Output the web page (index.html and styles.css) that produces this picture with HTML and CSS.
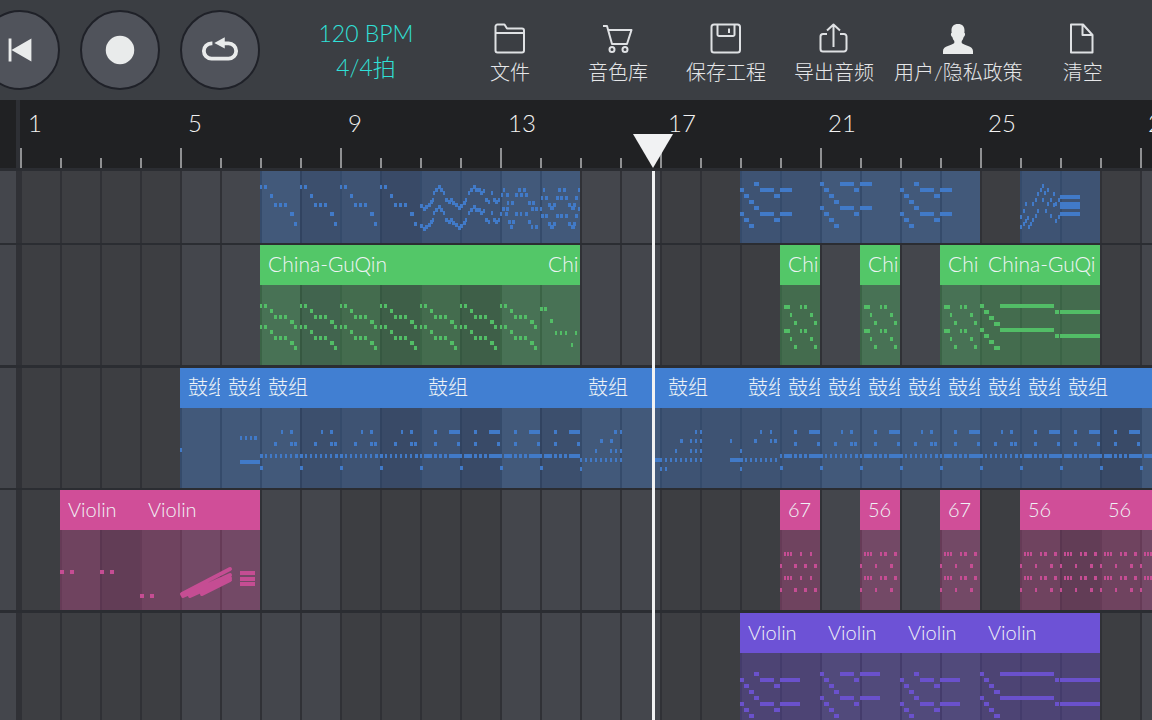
FILE: index.html
```
<!DOCTYPE html>
<html lang="zh-CN">
<head>
<meta charset="utf-8">
<meta name="viewport" content="width=device-width, initial-scale=1">
<title>编曲工程</title>
<link rel="stylesheet" href="styles.css">
</head>
<body>
<svg class="defs" aria-hidden="true">
  <defs>
    <path id="fall" d="M0 24h2M4 24h3M10 33h3M14 42h3M19 42h3M24 42h3M30 51h4M34 61h3"/>
    <path id="wave" d="M0 43h3M3 46h3M5 44h3M8 42h3M10 39h3M12 37h2M13 30h2M15 27h3M18 24h3M20 27h3M23 30h2M25 37h3M28 39h3M30 37h3M32 40h3M35 42h3M38 45h3M40 43h3M43 40h3M45 37h2M48 30h2M50 27h3M53 24h3M55 27h3M58 27h3M60 30h3M63 28h2M65 37h3M68 39h2M71 30h2M73 37h3M75 39h3M78 37h2"/>
    <path id="weave-a" d="M3 27h2M18 27h3M23 27h3M1 32h2M6 32h3M15 32h3M20 32h3M25 32h3M7 40h2M11 40h3M28 40h3M32 40h3M2 46h3M6 46h3M31 46h3M35 46h3M0 51h2M5 51h3M15 51h3M20 51h2M25 51h3M8 59h3M12 59h3M28 59h3M10 64h3M31 64h2M35 64h3"/>
    <path id="weave-b" d="M3 27h2M18 27h3M23 27h3M38 27h2M1 35h2M5 35h3M16 35h3M20 35h3M25 35h3M35 35h3M8 42h3M13 42h3M28 42h3M33 42h3M0 46h2M10 45h4M31 45h4M38 46h2M1 53h3M5 53h3M16 53h3M20 53h3M25 53h3M35 53h3M8 61h3M13 61h3M28 61h3M33 61h3M10 64h4M31 64h4"/>
    <path id="step-a" d="M0 27h4M4 33h5M9 39h5M14 21h5M20 27h14M34 33h6M40 27h12"/>
    <path id="step-b" d="M0 21h4M4 27h5M9 33h5M14 39h5M20 21h14M34 27h5M40 21h12"/>
    <path id="step-c" d="M0 21h4M4 27h5M9 33h5M14 39h6M20 21h54M75 27h4M80 27h40"/>
    <path id="rise" d="M0 64h2M3 61h2M5 58h2M0 54h2M3 48h2M5 41h2M8 64h2M10 61h2M12 57h2M7 55h2M12 41h2M15 37h2M15 53h2M17 31h2M17 48h2M20 27h2M22 23h2M24 30h2M27 27h2M25 48h2M22 37h2M27 41h2M30 37h2M33 31h2M33 42h2M30 53h2M35 58h2M38 54h2M35 41h2M38 37h2"/>
    <path id="pluck" d="M0 21h2M4 21h3M10 26h3M14 32h3M19 32h3M24 32h3M30 37h4M34 42h3"/>
    <path id="cross" d="M4 22h6M20 22h2M24 22h3M10 30h2M30 30h3M14 38h3M34 38h3"/>
    <path id="beat-a" d="M21 24h2M30 24h3M14 36h3M30 36h3M34 36h3M0 48h3M5 48h2M10 48h2M15 48h2M20 48h2M25 48h2M30 48h2M35 48h3M0 60h3"/>
    <path id="beat-b" d="M14 24h3M29 24h11M14 36h3M37 36h3M0 48h2M4 48h8M14 48h3M19 48h3M24 48h3M29 48h11M0 60h3"/>
    <path id="fiddle" d="M0 42h4M10 42h4"/>
    <path id="ring-a" d="M4 24h2M7 24h2M10 24h2M20 24h2M30 24h2M0 36h2M14 36h3M24 36h3M34 36h3"/>
    <path id="ring-b" d="M4 24h2M7 24h2M10 24h2M20 24h2M24 24h3M34 24h3M0 36h2M15 36h2M30 36h3"/>
  </defs>
</svg>

<header class="toolbar">
  <div class="transport">
    <button type="button" class="round" aria-label="回到开头"><svg viewBox="0 0 80 80"><path d="M28 28h3v24h-3zM31 40L52 28v24z"/></svg></button>
    <button type="button" class="round" aria-label="录音"><svg viewBox="0 0 80 80"><circle cx="40" cy="40" r="15"/></svg></button>
    <button type="button" class="round" aria-label="循环"><svg viewBox="0 0 80 80"><path class="loop" d="M32 33h-1a8 8 0 0 0 0 16h18a8 8 0 0 0 0-16h-5"/><path d="M34 32.500L45 26.500v12z"/></svg></button>
  </div>
  <button type="button" class="tempo"><span>120 BPM</span><span>4/4拍</span></button>
  <nav class="menu">
    <button type="button"><svg viewBox="0 0 32 32"><path d="M1.500 11V4.500a2 2 0 0 1 2-2h7l2.500 4h15a2 2 0 0 1 2 2v20a2 2 0 0 1-2 2h-24.500a2 2 0 0 1-2-2zh28.500"/></svg><span>文件</span></button>
    <button type="button"><svg viewBox="0 0 32 32"><path d="M1 4h4l5 18h15l4.500-14H6.500"/><circle cx="10" cy="27.500" r="2.500"/><circle cx="23" cy="27.500" r="2.500"/></svg><span>音色库</span></button>
    <button type="button"><svg viewBox="0 0 32 32"><rect x="1.500" y="2.500" width="28.500" height="28" rx="2.500"/><path d="M7.500 3v9.500a1.500 1.500 0 0 0 1.500 1.500h14a1.500 1.500 0 0 0 1.500-1.500V3M19 6.500v4.500"/></svg><span>保存工程</span></button>
    <button type="button"><svg viewBox="0 0 32 32"><path d="M9 12H5a2.500 2.500 0 0 0-2.500 2.500v12.500a2.500 2.500 0 0 0 2.500 2.500h21a2.500 2.500 0 0 0 2.500-2.500V14.500a2.500 2.500 0 0 0-2.500-2.500h-4M15.500 25V2.500M9 8.500L15.500 2.500 22 8.500"/></svg><span>导出音频</span></button>
    <button type="button"><svg viewBox="0 0 32 32"><path class="solid" d="M16 2c4.500 0 6.500 2.500 6.500 6.500 0 .8 0 1.500-.2 2.200 1.200.3 1 3.300-.6 4.300-.5 2-1.200 3.200-2 4v2c2 2.500 11.300 2.500 11.300 8V32H1v-3c0-5.500 9.300-5.500 11.300-8V19c-.8-.8-1.500-2-2-4-1.600-1-1.800-4-.6-4.300-.2-.7-.2-1.400-.2-2.200C9.500 4.500 11.500 2 16 2z"/></svg><span>用户/隐私政策</span></button>
    <button type="button"><svg viewBox="0 0 32 32"><path d="M4 2.500h12l9.500 10.500v17.500H4zM15.500 2.500V13h10"/></svg><span>清空</span></button>
  </nav>
</header>

<main class="timeline">
  <ol class="ruler">
    <li>1</li><li>5</li><li>9</li><li>13</li><li>17</li><li>21</li><li>25</li><li>29</li>
  </ol>

  <section class="tracks">
    <div class="track blue scrolled">
      <div class="clip" style="--start:7;--len:8"><svg class="notes">
        <rect class="repeat" x="40" width="40" height="80"/><rect class="repeat" x="120" width="40" height="80"/>
        <use href="#fall"/><use href="#fall" x="40"/><use href="#fall" x="80"/><use href="#fall" x="120"/>
        <use href="#wave" x="160"/><use href="#wave" x="160" y="20"/><use href="#weave-a" x="240"/><use href="#weave-b" x="280"/></svg></div>
      <div class="clip" style="--start:19;--len:6"><svg class="notes">
        <use href="#step-a"/><use href="#step-a" y="24"/><use href="#step-b" x="80"/><use href="#step-b" x="80" y="24"/><use href="#step-a" x="160"/><use href="#step-a" x="160" y="24"/></svg></div>
      <div class="clip" style="--start:26;--len:2"><svg class="notes"><use href="#rise"/><path d="M40 34h20M40 41h20M40 44h20M40 51h20"/></svg></div>
    </div>

    <div class="track green">
      <div class="clip" style="--start:7;--len:7"><h2>China-GuQin</h2><svg class="notes">
        <rect class="repeat" x="40" width="40" height="80"/><rect class="repeat" x="120" width="40" height="80"/><rect class="repeat" x="200" width="40" height="80"/>
        <use href="#pluck"/><use href="#pluck" y="21"/><use href="#pluck" x="40"/><use href="#pluck" x="40" y="21"/><use href="#pluck" x="80"/><use href="#pluck" x="80" y="21"/><use href="#pluck" x="120"/><use href="#pluck" x="120" y="21"/><use href="#pluck" x="160"/><use href="#pluck" x="160" y="21"/><use href="#pluck" x="200"/><use href="#pluck" x="200" y="21"/><use href="#pluck" x="240"/><use href="#pluck" x="240" y="21"/></svg></div>
      <div class="clip" style="--start:14;--len:1"><h2>Chi</h2><svg class="notes"><path d="M0 24h3M4 24h3M10 36h3M15 48h2M20 48h2M25 48h2M35 48h2M31 60h2"/></svg></div>
      <div class="clip" style="--start:20;--len:1"><h2>Chi</h2><svg class="notes"><use href="#cross"/><use href="#cross" y="24"/></svg></div>
      <div class="clip" style="--start:22;--len:1"><h2>Chi</h2><svg class="notes"><use href="#cross"/><use href="#cross" y="24"/></svg></div>
      <div class="clip" style="--start:24;--len:1"><h2>Chi</h2><svg class="notes"><use href="#cross"/><use href="#cross" y="24"/></svg></div>
      <div class="clip" style="--start:25;--len:3"><h2>China-GuQi</h2><svg class="notes"><use href="#step-c"/><use href="#step-c" y="24"/></svg></div>
    </div>

    <div class="track blue">
      <div class="clip" style="--start:5;--len:1"><h2>鼓组</h2><svg class="notes"><path d="M0 42h2"/></svg></div>
      <div class="clip" style="--start:6;--len:1"><h2>鼓组</h2><svg class="notes"><path d="M20 30h2M25 30h2M30 30h2M34 30h3M20 54h20"/></svg></div>
      <div class="clip" style="--start:7;--len:4"><h2>鼓组</h2><svg class="notes">
        <rect class="repeat" x="40" width="40" height="80"/><rect class="repeat" x="120" width="40" height="80"/>
        <use href="#beat-a"/><use href="#beat-a" x="40"/><use href="#beat-a" x="80"/><use href="#beat-a" x="120"/></svg></div>
      <div class="clip" style="--start:11;--len:4"><h2>鼓组</h2><svg class="notes">
        <rect class="repeat" x="40" width="40" height="80"/><rect class="repeat" x="120" width="40" height="80"/>
        <use href="#beat-b"/><use href="#beat-b" x="40"/><use href="#beat-b" x="80"/><use href="#beat-b" x="120"/></svg></div>
      <div class="clip" style="--start:15;--len:2"><h2>鼓组</h2><svg class="notes"><path d="M34 24h3M40 24h2M20 33h3M30 33h3M15 43h2M30 43h2M35 43h2M40 43h2M0 52h2M5 52h2M10 52h2M15 52h2M20 52h2M25 52h2M30 52h2M35 52h2M40 52h2M75 52h5M0 61h2"/></svg></div>
      <div class="clip" style="--start:17;--len:2"><h2>鼓组</h2><svg class="notes"><path d="M35 24h2M40 24h2M20 33h3M30 33h2M35 33h2M40 33h2M15 43h2M30 43h2M35 43h2M40 43h2M0 52h2M5 52h2M10 52h2M15 52h2M20 52h2M25 52h2M30 52h2M35 52h2M40 52h2M0 61h2M5 61h2M70 33h2M70 52h10"/></svg></div>
      <div class="clip" style="--start:19;--len:1"><h2>鼓组</h2><svg class="notes"><path d="M20 24h2M30 24h2M14 33h3M30 33h2M34 33h3M0 43h2M0 52h3M5 52h2M10 52h2M15 52h2M20 52h2M25 52h2M30 52h2M35 52h2M0 61h2"/></svg></div>
      <div class="clip" style="--start:20;--len:1"><h2>鼓组</h2><svg class="notes"><use href="#beat-b"/></svg></div>
      <div class="clip" style="--start:21;--len:1"><h2>鼓组</h2><svg class="notes"><use href="#beat-a"/></svg></div>
      <div class="clip" style="--start:22;--len:1"><h2>鼓组</h2><svg class="notes"><use href="#beat-b"/></svg></div>
      <div class="clip" style="--start:23;--len:1"><h2>鼓组</h2><svg class="notes"><use href="#beat-a"/></svg></div>
      <div class="clip" style="--start:24;--len:1"><h2>鼓组</h2><svg class="notes"><use href="#beat-b"/></svg></div>
      <div class="clip" style="--start:25;--len:1"><h2>鼓组</h2><svg class="notes"><use href="#beat-a"/></svg></div>
      <div class="clip" style="--start:26;--len:1"><h2>鼓组</h2><svg class="notes"><use href="#beat-b"/></svg></div>
      <div class="clip" style="--start:27;--len:4"><h2>鼓组</h2><svg class="notes">
        <rect class="repeat" x="40" width="40" height="80"/><rect class="repeat" x="120" width="40" height="80"/>
        <use href="#beat-b"/><use href="#beat-b" x="40"/><use href="#beat-b" x="80"/><use href="#beat-b" x="120"/></svg></div>
    </div>

    <div class="track pink">
      <div class="clip" style="--start:2;--len:2"><h2>Violin</h2><svg class="notes"><rect class="repeat" x="40" width="40" height="80"/><use href="#fiddle"/><use href="#fiddle" x="40"/></svg></div>
      <div class="clip" style="--start:4;--len:3"><h2>Violin</h2><svg class="notes"><path d="M0 66h4M10 66h4M100 43h15M100 49h15M100 54h15"/><path class="slide" d="M42 64L90 39M43 66L90 45M50 66L90 48M62 64L90 50"/></svg></div>
      <div class="clip" style="--start:20;--len:1"><h2>67</h2><svg class="notes"><use href="#ring-a"/><use href="#ring-a" y="24"/></svg></div>
      <div class="clip" style="--start:22;--len:1"><h2>56</h2><svg class="notes"><use href="#ring-b"/><use href="#ring-b" y="24"/></svg></div>
      <div class="clip" style="--start:24;--len:1"><h2>67</h2><svg class="notes"><use href="#ring-b"/><use href="#ring-b" y="24"/></svg></div>
      <div class="clip" style="--start:26;--len:2"><h2>56</h2><svg class="notes"><rect class="repeat" x="40" width="40" height="80"/><use href="#ring-b"/><use href="#ring-b" y="24"/><use href="#ring-b" x="40"/><use href="#ring-b" x="40" y="24"/></svg></div>
      <div class="clip" style="--start:28;--len:2"><h2>56</h2><svg class="notes"><use href="#ring-b"/><use href="#ring-b" y="24"/><use href="#ring-b" x="40"/><use href="#ring-b" x="40" y="24"/></svg></div>
    </div>

    <div class="track purple">
      <div class="clip" style="--start:19;--len:2"><h2>Violin</h2><svg class="notes"><use href="#step-a"/><use href="#step-a" y="24"/><path d="M52 27h8M52 51h8"/></svg></div>
      <div class="clip" style="--start:21;--len:2"><h2>Violin</h2><svg class="notes"><use href="#step-b"/><use href="#step-b" y="24"/><path d="M52 21h8M52 45h8"/></svg></div>
      <div class="clip" style="--start:23;--len:2"><h2>Violin</h2><svg class="notes"><use href="#step-a"/><use href="#step-a" y="24"/><path d="M52 27h8M52 51h8"/></svg></div>
      <div class="clip" style="--start:25;--len:3"><h2>Violin</h2><svg class="notes"><use href="#step-c"/><use href="#step-c" y="24"/></svg></div>
    </div>
  </section>

  <div class="playhead"><svg viewBox="0 0 40 34"><path d="M0 0h40L20 34z"/></svg></div>
</main>
</body>
</html>
```

FILE: styles.css
```
* {
  box-sizing: border-box;
}

body {
  margin: 0;
  height: 100vh;
  display: flex;
  flex-direction: column;
  overflow: hidden;
  background: #3d3e43;
  color: #e6e7e9;
  font-family: Lato, "Noto Sans CJK SC", sans-serif;
  font-weight: 300;
}

.defs {
  display: none;
}

button {
  padding: 0;
  border: 0;
  background: none;
  color: inherit;
  font: inherit;
  cursor: pointer;
}

/* Toolbar */

.toolbar {
  flex: none;
  display: flex;
  align-items: center;
  height: 100px;
  overflow: hidden;
  background: #3b3e43;
}

.transport {
  flex: none;
  display: flex;
  gap: 20px;
  margin-left: -20px;
}

.round {
  width: 80px;
  height: 80px;
  border: 2px solid #1f2128;
  border-radius: 50%;
  background: #50535b;
}

.round svg {
  display: block;
  width: 100%;
  fill: #e9ebeb;
}

.round .loop {
  fill: none;
  stroke: #e9ebeb;
  stroke-width: 4;
}

.tempo {
  flex: none;
  display: flex;
  flex-direction: column;
  min-width: 108px;
  margin-left: 52px;
  color: #30e0d8;
  font-size: 23px;
  line-height: 34px;
}

.menu {
  flex: none;
  display: flex;
  margin-left: 36px;
}

.menu button {
  display: flex;
  flex-direction: column;
  align-items: center;
  gap: 6px;
  min-width: 108px;
  padding: 6px 6px 0;
  font-size: 20px;
  line-height: 24px;
  white-space: nowrap;
}

.menu svg {
  width: 32px;
  height: 32px;
  fill: none;
  stroke: #dfe1e4;
  stroke-width: 2;
  stroke-linejoin: round;
}

.menu .solid {
  fill: #e9ebeb;
  stroke: none;
}

/* Ruler */

.timeline {
  position: relative;
  flex: 1;
  min-height: 0;
  overflow: hidden;
}

.ruler {
  display: grid;
  grid-auto-flow: column;
  grid-auto-columns: 160px;
  justify-content: start;
  height: 71px;
  margin: 0;
  padding: 0 0 0 20px;
  border-bottom: 3px solid #2b2d32;
  list-style: none;
  color: #f2f2f2;
  font-size: 24px;
  line-height: 46px;
  background:
    linear-gradient(#2e3035, #2e3035) 16px 0 / 4px 100% no-repeat,
    repeating-linear-gradient(90deg, #8f9092 0 2px, transparent 2px 160px) 20px 100% / 100% 20px no-repeat,
    repeating-linear-gradient(90deg, #8f9092 0 2px, transparent 2px 40px) 20px 100% / 100% 10px no-repeat,
    #202123;
}

.ruler li {
  padding-left: 8px;
}

/* Tracks */

.track {
  display: grid;
  grid-template-rows: 120px;
  grid-auto-columns: 40px;
  grid-auto-flow: column;
  justify-content: start;
  align-content: end;
  height: 122px;
  padding-left: 20px;
  border-bottom: 2px solid #2b2d32;
  background:
    linear-gradient(#303136, #303136) 16px 0 / 6px 100% no-repeat,
    repeating-linear-gradient(90deg, #303136 0 2px, transparent 2px 40px) 20px 0 / 100% 100% no-repeat,
    repeating-linear-gradient(90deg, #3d3e42 0 160px, #44464c 160px 320px) 20px 0 / 100% 100% no-repeat,
    #44464c;
}

.track:nth-child(even) {
  height: 123px;
  border-bottom-width: 3px;
}

.track.scrolled {
  grid-template-rows: 72px;
  height: 74px;
}

.blue {
  --tint: #417fd2;
}

.green {
  --tint: #53c768;
}

.pink {
  --tint: #d04e98;
}

.purple {
  --tint: #6d52d6;
}

.clip {
  grid-row: 1;
  grid-column: var(--start) / span var(--len);
  display: flex;
  flex-direction: column;
  justify-content: flex-end;
  min-width: 0;
  overflow: hidden;
  color: var(--tint);
}

.clip h2 {
  flex: none;
  height: 40px;
  margin: 0;
  padding-left: 8px;
  overflow: hidden;
  background: var(--tint);
  color: #f0f4f6;
  font-size: 20px;
  font-weight: 300;
  line-height: 38px;
  white-space: nowrap;
}

.green h2 {
  font-size: 21px;
}

.notes {
  flex: none;
  display: block;
  width: 100%;
  height: 80px;
  background: color-mix(in srgb, var(--tint) 34%, transparent);
  fill: none;
  stroke: color-mix(in srgb, var(--tint) 92%, #445);
  stroke-width: 4;
  shape-rendering: crispEdges;
}

.repeat {
  fill: #20222a;
  fill-opacity: 0.16;
  stroke: none;
}

.slide {
  stroke-linecap: round;
  shape-rendering: auto;
}

/* Playhead */

.playhead {
  position: absolute;
  top: 34px;
  bottom: 0;
  left: 633px;
  width: 40px;
  background: linear-gradient(#f1f2f3, #f1f2f3) 19px 37px / 3px 100% no-repeat;
  pointer-events: none;
}

.playhead svg {
  display: block;
  width: 100%;
  fill: #f1f2f3;
}
```
